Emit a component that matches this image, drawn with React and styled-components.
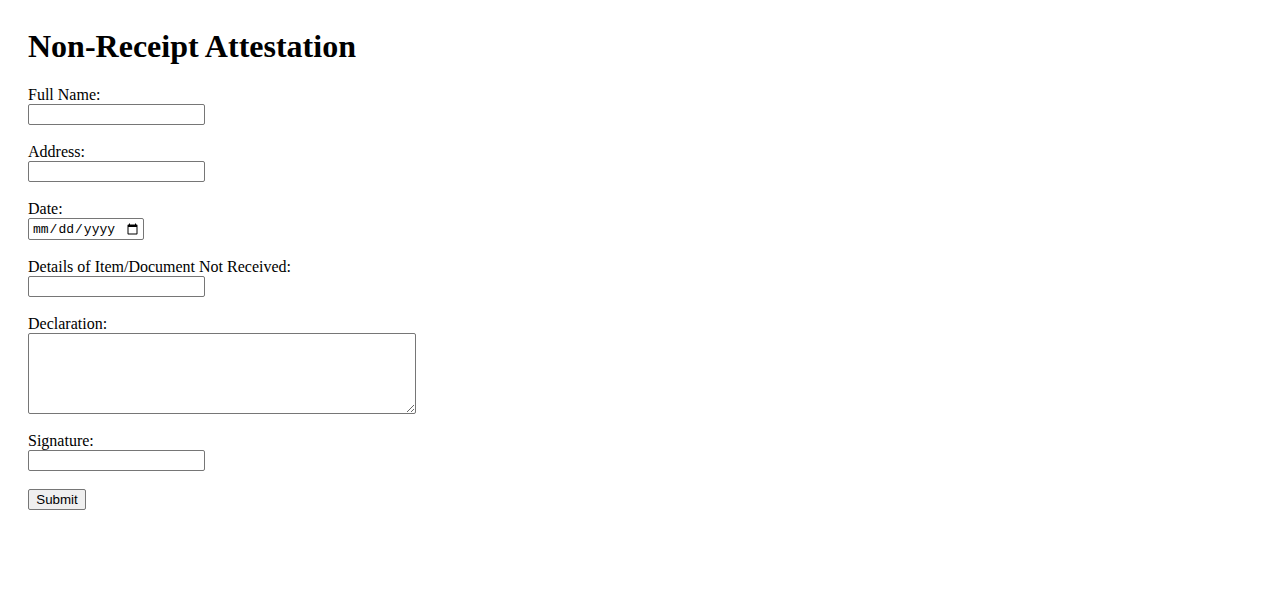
import React from 'react';
import styled, { createGlobalStyle } from 'styled-components';

const GlobalStyle = createGlobalStyle`
  body {
    margin: 0;
    background: #fff;
    color: #000;
    font-family: "Liberation Serif", "Times New Roman", serif;
    font-size: 16px;
  }
`;

const Page = styled.div`
  padding: 28px;
`;

const Title = styled.h1`
  font-size: 32px;
  font-weight: bold;
  line-height: 37px;
  margin: 0 0 21px;
`;

const Form = styled.form`
  display: flex;
  flex-direction: column;
  align-items: flex-start;
`;

const Field = styled.div`
  display: flex;
  flex-direction: column;
  align-items: flex-start;
  margin-bottom: 18px;
`;

const Label = styled.label`
  display: block;
  line-height: 18px;
`;

const TextInput = styled.input`
  box-sizing: border-box;
  width: ${(p) => p.$width || '177px'};
  height: ${(p) => p.$height || '21px'};
  margin: 0;
  padding: 1px 2px;
  border: 1px solid #767676;
  border-radius: 2px;
  background: #fff;
  font-family: "Liberation Sans", Arial, sans-serif;
  font-size: 13.33px;
  color: #000;
`;

const DateInput = styled(TextInput)`
  font-family: "Liberation Mono", "DejaVu Sans Mono", monospace;
  font-size: 13px;
  padding: 1px 2px 1px 3px;
`;

const TextArea = styled.textarea`
  box-sizing: border-box;
  width: 388px;
  height: 81px;
  margin: 0;
  padding: 2px;
  border: 1px solid #767676;
  border-radius: 2px;
  font-family: "Liberation Mono", monospace;
  font-size: 13.33px;
  display: block;
`;

const SubmitButton = styled.button`
  box-sizing: border-box;
  width: 58px;
  height: 21px;
  padding: 1px 6px;
  border: 1px solid #767676;
  border-radius: 2px;
  background: #efefef;
  color: #000;
  font-family: "Liberation Sans", Arial, sans-serif;
  font-size: 13.33px;
  line-height: 15px;
`;

const fields = [
  { id: 'name', label: 'Full Name:' },
  { id: 'address', label: 'Address:' },
  { id: 'date', label: 'Date:', type: 'date' },
  { id: 'details', label: 'Details of Item/Document Not Received:' },
  { id: 'declaration', label: 'Declaration:', area: true },
  { id: 'signature', label: 'Signature:' },
];

export default function App() {
  return (
    <Page>
      <GlobalStyle />
      <Title>Non-Receipt Attestation</Title>
      <Form onSubmit={(e) => e.preventDefault()}>
        {fields.map((f) => (
          <Field key={f.id}>
            <Label htmlFor={f.id}>{f.label}</Label>
            {f.area ? (
              <TextArea id={f.id} />
            ) : f.type === 'date' ? (
              <DateInput id={f.id} type="date" $width="116px" $height="22px" />
            ) : (
              <TextInput id={f.id} type="text" />
            )}
          </Field>
        ))}
        <SubmitButton type="submit">Submit</SubmitButton>
      </Form>
    </Page>
  );
}
